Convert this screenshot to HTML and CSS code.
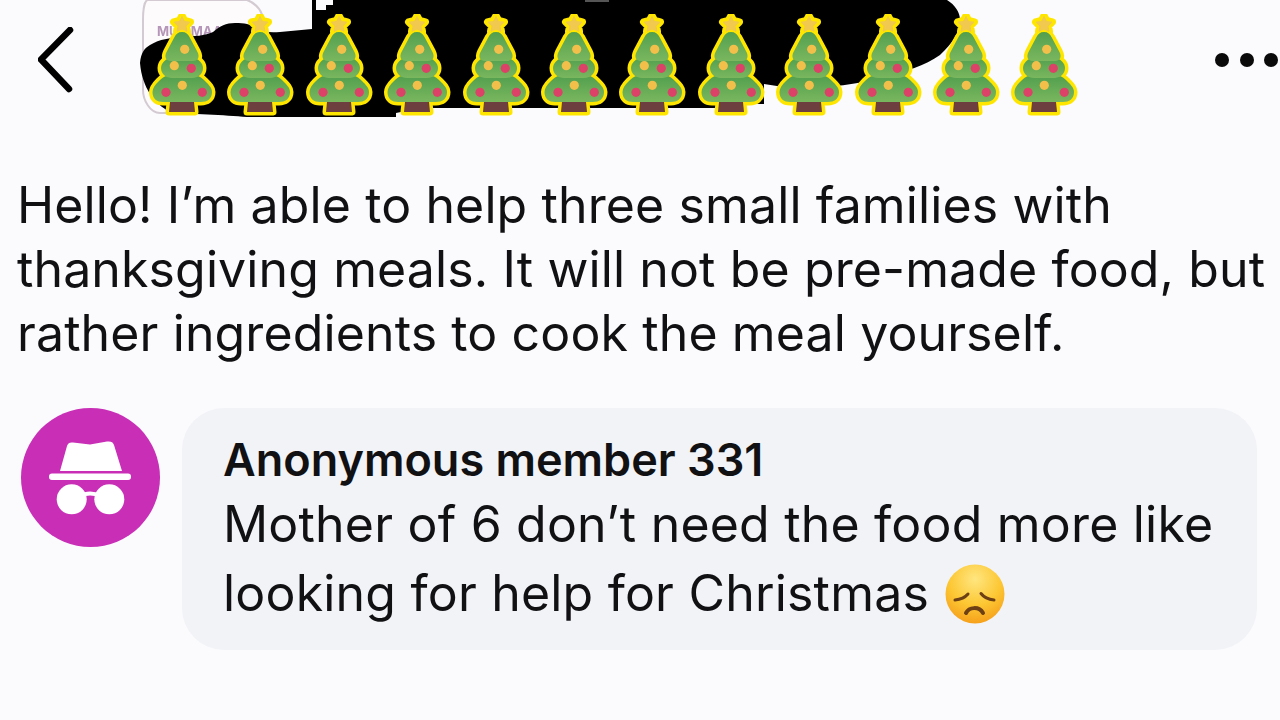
FILE: index.html
```html
<!DOCTYPE html>
<html lang="en">
<head>
<meta charset="utf-8">
<title>Post</title>
<link rel="stylesheet" href="styles.css">
</head>
<body>
<svg class="defs" width="0" height="0" aria-hidden="true">
  <defs>
    <linearGradient id="green" x1="0" y1="0" x2="0" y2="1">
      <stop offset="0" stop-color="#519f4e"/>
      <stop offset=".4" stop-color="#63a955"/>
      <stop offset="1" stop-color="#7ab75e"/>
    </linearGradient>
    <radialGradient id="face" cx=".5" cy=".25" r=".8">
      <stop offset="0" stop-color="#ffe680"/>
      <stop offset=".55" stop-color="#fcc733"/>
      <stop offset="1" stop-color="#f59a18"/>
    </radialGradient>
    <g id="tree-shape">
      <path d="M34 18C38 18 40 20 41.500 23L49.500 38C52 43 50 47 45 47H23C18 47 16 43 18.500 38L26.500 23C28 20 30 18 34 18Z"/>
      <path d="M24 44H44C50 44 55 49 55 54C55 60 50 64 44 64H24C18 64 13 60 13 54C13 49 18 44 24 44Z"/>
      <path d="M20 62H48C52 62 54 64 57 67C61 71 64 74 64 78C64 85 59 88 53 88H15C9 88 4.500 85 4.500 78C4.500 74 7 71 11 67C14 64 16 62 20 62Z"/>
      <path d="M22 89H46L47 98H21Z"/>
      <path d="M34 1.500L36.700 6.500L42.500 8L38.500 12L39.500 17.500L34 15L28.500 17.500L29.500 12L25.500 8L31.300 6.500Z"/>
    </g>
    <symbol id="tree" viewBox="0 0 68 104">
      <use href="#tree-shape" class="tree-outline"/>
      <path class="trunk" d="M22 88H46L47 98H21Z"/>
      <path class="star" d="M34 2.500L36.500 7.500L42 8.200L38 12.200L39 17.200L34 15L29 17.200L30 12.200L26 8.200L31.500 7.500Z"/>
      <path class="leaf" d="M20 62H48C52 62 54 64 57 67C61 71 64 74 64 78C64 85 59 88 53 88H15C9 88 4.500 85 4.500 78C4.500 74 7 71 11 67C14 64 16 62 20 62Z"/>
      <path class="leaf" d="M24 44H44C50 44 55 49 55 54C55 60 50 64 44 64H24C18 64 13 60 13 54C13 49 18 44 24 44Z"/>
      <path class="leaf" d="M34 18C38 18 40 20 41.500 23L49.500 38C52 43 50 47 45 47H23C18 47 16 43 18.500 38L26.500 23C28 20 30 18 34 18Z"/>
      <circle class="ball-y" cx="36.700" cy="35.300" r="4.600"/>
      <circle class="ball-y" cx="26.300" cy="51.700" r="4.600"/>
      <circle class="ball-p" cx="43.300" cy="54.300" r="4.600"/>
      <circle class="ball-y" cx="34.300" cy="71.300" r="4.600"/>
      <circle class="ball-p" cx="18" cy="78.300" r="4.600"/>
      <circle class="ball-p" cx="54.300" cy="78.300" r="4.600"/>
    </symbol>
  </defs>
</svg>
<main class="page">
  <header class="topbar">
    <svg class="redaction" width="1280" height="120" viewBox="0 0 1280 120" aria-hidden="true">
      <path class="photo" d="M143 20C143 8 145 0 148 0H247C258 4 265 14 265 32L270 113H160C150 113 143 100 143 90Z"/>
      <text class="photo-text" x="157" y="36">MUMMAA</text>
      <path class="blot" d="M140 63C141 52 145 48 150 45C160 39 170 38 180 37C195 36 205 36 213 32C220 26 226 23 235 23C245 23 250 24 256 28C262 32 270 33 280 32L312 29V0H947C955 5 960 12 960 20C960 32 952 44 940 55C925 66 905 71 885 77C860 84 830 88 790 88L764 84V104H730V108H420L396 113V117H247C225 115 190 114 170 112C155 104 142 88 140 63Z"/>
      <path class="cut" d="M316 0H333V5H326V10H316Z"/>
      <rect class="smudge" x="585" y="0" width="24" height="2"/>
    </svg>
    <div class="trees">
      <svg class="tree-icon"><use href="#tree"/></svg>
      <svg class="tree-icon"><use href="#tree"/></svg>
      <svg class="tree-icon"><use href="#tree"/></svg>
      <svg class="tree-icon"><use href="#tree"/></svg>
      <svg class="tree-icon"><use href="#tree"/></svg>
      <svg class="tree-icon"><use href="#tree"/></svg>
      <svg class="tree-icon"><use href="#tree"/></svg>
      <svg class="tree-icon"><use href="#tree"/></svg>
      <svg class="tree-icon"><use href="#tree"/></svg>
      <svg class="tree-icon"><use href="#tree"/></svg>
      <svg class="tree-icon"><use href="#tree"/></svg>
      <svg class="tree-icon"><use href="#tree"/></svg>
    </div>
    <svg class="back" width="40" height="70" viewBox="0 0 40 70" aria-label="Back">
      <path d="M32 3L3 32.500L31 62"/>
    </svg>
    <div class="more" aria-label="More"><span></span><span></span><span></span></div>
  </header>

  <p class="post">Hello! I’m able to help three small families with<br>thanksgiving meals. It will not be pre-made food, but<br>rather ingredients to cook the meal yourself.</p>

  <section class="comment">
    <svg class="avatar" width="139" height="139" viewBox="0 0 139 139" aria-label="Anonymous member">
      <circle cx="69.500" cy="69.500" r="69.500" fill="#c82eb6"/>
      <path class="hat" d="M39 63L46 38C47 35 49 34 52 34.500L69 36.500L86 33.500C90 33 92 34 93 37L101 63Z"/>
      <rect class="hat" x="28" y="65.500" width="82" height="6.500" rx="3"/>
      <circle class="hat" cx="50.700" cy="91.300" r="15"/>
      <circle class="hat" cx="88.300" cy="91.300" r="15"/>
      <path class="bridge" d="M60 88C65 84.500 73 84.500 79 88"/>
    </svg>
    <div class="bubble">
      <h2 class="name">Anonymous member 331</h2>
      <p class="body">Mother of 6 don’t need the food more like<br>looking for help for Christmas
        <svg class="emoji" width="62" height="62" viewBox="0 0 62 62" aria-label="Disappointed face">
          <circle cx="31" cy="31" r="29.500" fill="url(#face)"/>
          <path class="emoji-line" d="M11 37C16 36.500 21 34.500 24 31"/>
          <path class="emoji-line" d="M50 37C45 36.500 40 34.500 37 30.500"/>
          <path class="emoji-line thick" d="M22 50C25 44 35 43 39 50"/>
        </svg>
      </p>
    </div>
  </section>
</main>
</body>
</html>
```
FILE: styles.css
```css
* { box-sizing: border-box; }
html, body { margin: 0; height: 100%; }
body {
  background: #fbfbfe;
  color: #111114;
  font-family: Inter, "Liberation Sans", sans-serif;
  overflow: hidden;
}
.defs { position: absolute; }
.page { width: 1280px; height: 720px; }

.topbar {
  position: relative;
  height: 120px;
  display: flex;
  align-items: center;
  justify-content: space-between;
  padding: 0 2px 0 38px;
}
.redaction { position: absolute; left: 0; top: 0; }
.photo { fill: #fdfbfc; stroke: #d3cbd1; stroke-width: 2; }
.blot { fill: #000; }
.cut { fill: #fbfbfe; }
.smudge { fill: #555; }
.photo-text { font-size: 13px; font-weight: 700; fill: #b596b8; filter: blur(.6px); }
.trees {
  position: absolute;
  left: 148px;
  top: 14px;
  display: flex;
  gap: 10.400px;
}
.tree-icon { display: block; width: 68px; height: 104px; }
.tree-outline { fill: #ffe600; stroke: #ffe600; stroke-width: 7; stroke-linejoin: round; }
.leaf { fill: url(#green); }
.trunk { fill: #6d3f3f; }
.star { fill: #f0c94e; stroke: #f0c94e; stroke-width: 1; stroke-linejoin: round; }
.ball-y { fill: #f2c04a; }
.ball-p { fill: #dc4268; }

.back { position: relative; display: block; margin-top: 4px; }
.back path { fill: none; stroke: #000; stroke-width: 6.500; stroke-linecap: round; stroke-linejoin: round; }
.more { position: relative; display: flex; gap: 10.500px; }
.more span { width: 14px; height: 14px; border-radius: 50%; background: #0a0a0a; }

.post {
  margin: 53px 0 0;
  padding-left: 17px;
  font-size: 50px;
  line-height: 64px;
  letter-spacing: .12px;
  white-space: nowrap;
}

.comment {
  display: flex;
  align-items: flex-start;
  gap: 22px;
  margin-top: 43px;
  padding: 0 23px 0 21px;
}
.avatar { flex: none; display: block; }
.hat { fill: #fff; }
.bridge { fill: none; stroke: #fff; stroke-width: 4; }
.bubble {
  flex: 1;
  height: 242px;
  padding: 22px 0 0 41px;
  background: #f2f3f7;
  border-radius: 42px;
}
.name { margin: 0; font-size: 45px; line-height: 60px; font-weight: 600; white-space: nowrap; }
.body { margin: 0; font-size: 50px; line-height: 69px; letter-spacing: .2px; white-space: nowrap; }
.emoji { vertical-align: -14px; margin-left: 1px; }
.emoji-line { fill: none; stroke: #6d3f14; stroke-width: 3; stroke-linecap: round; }
.emoji-line.thick { stroke-width: 4; }
```
